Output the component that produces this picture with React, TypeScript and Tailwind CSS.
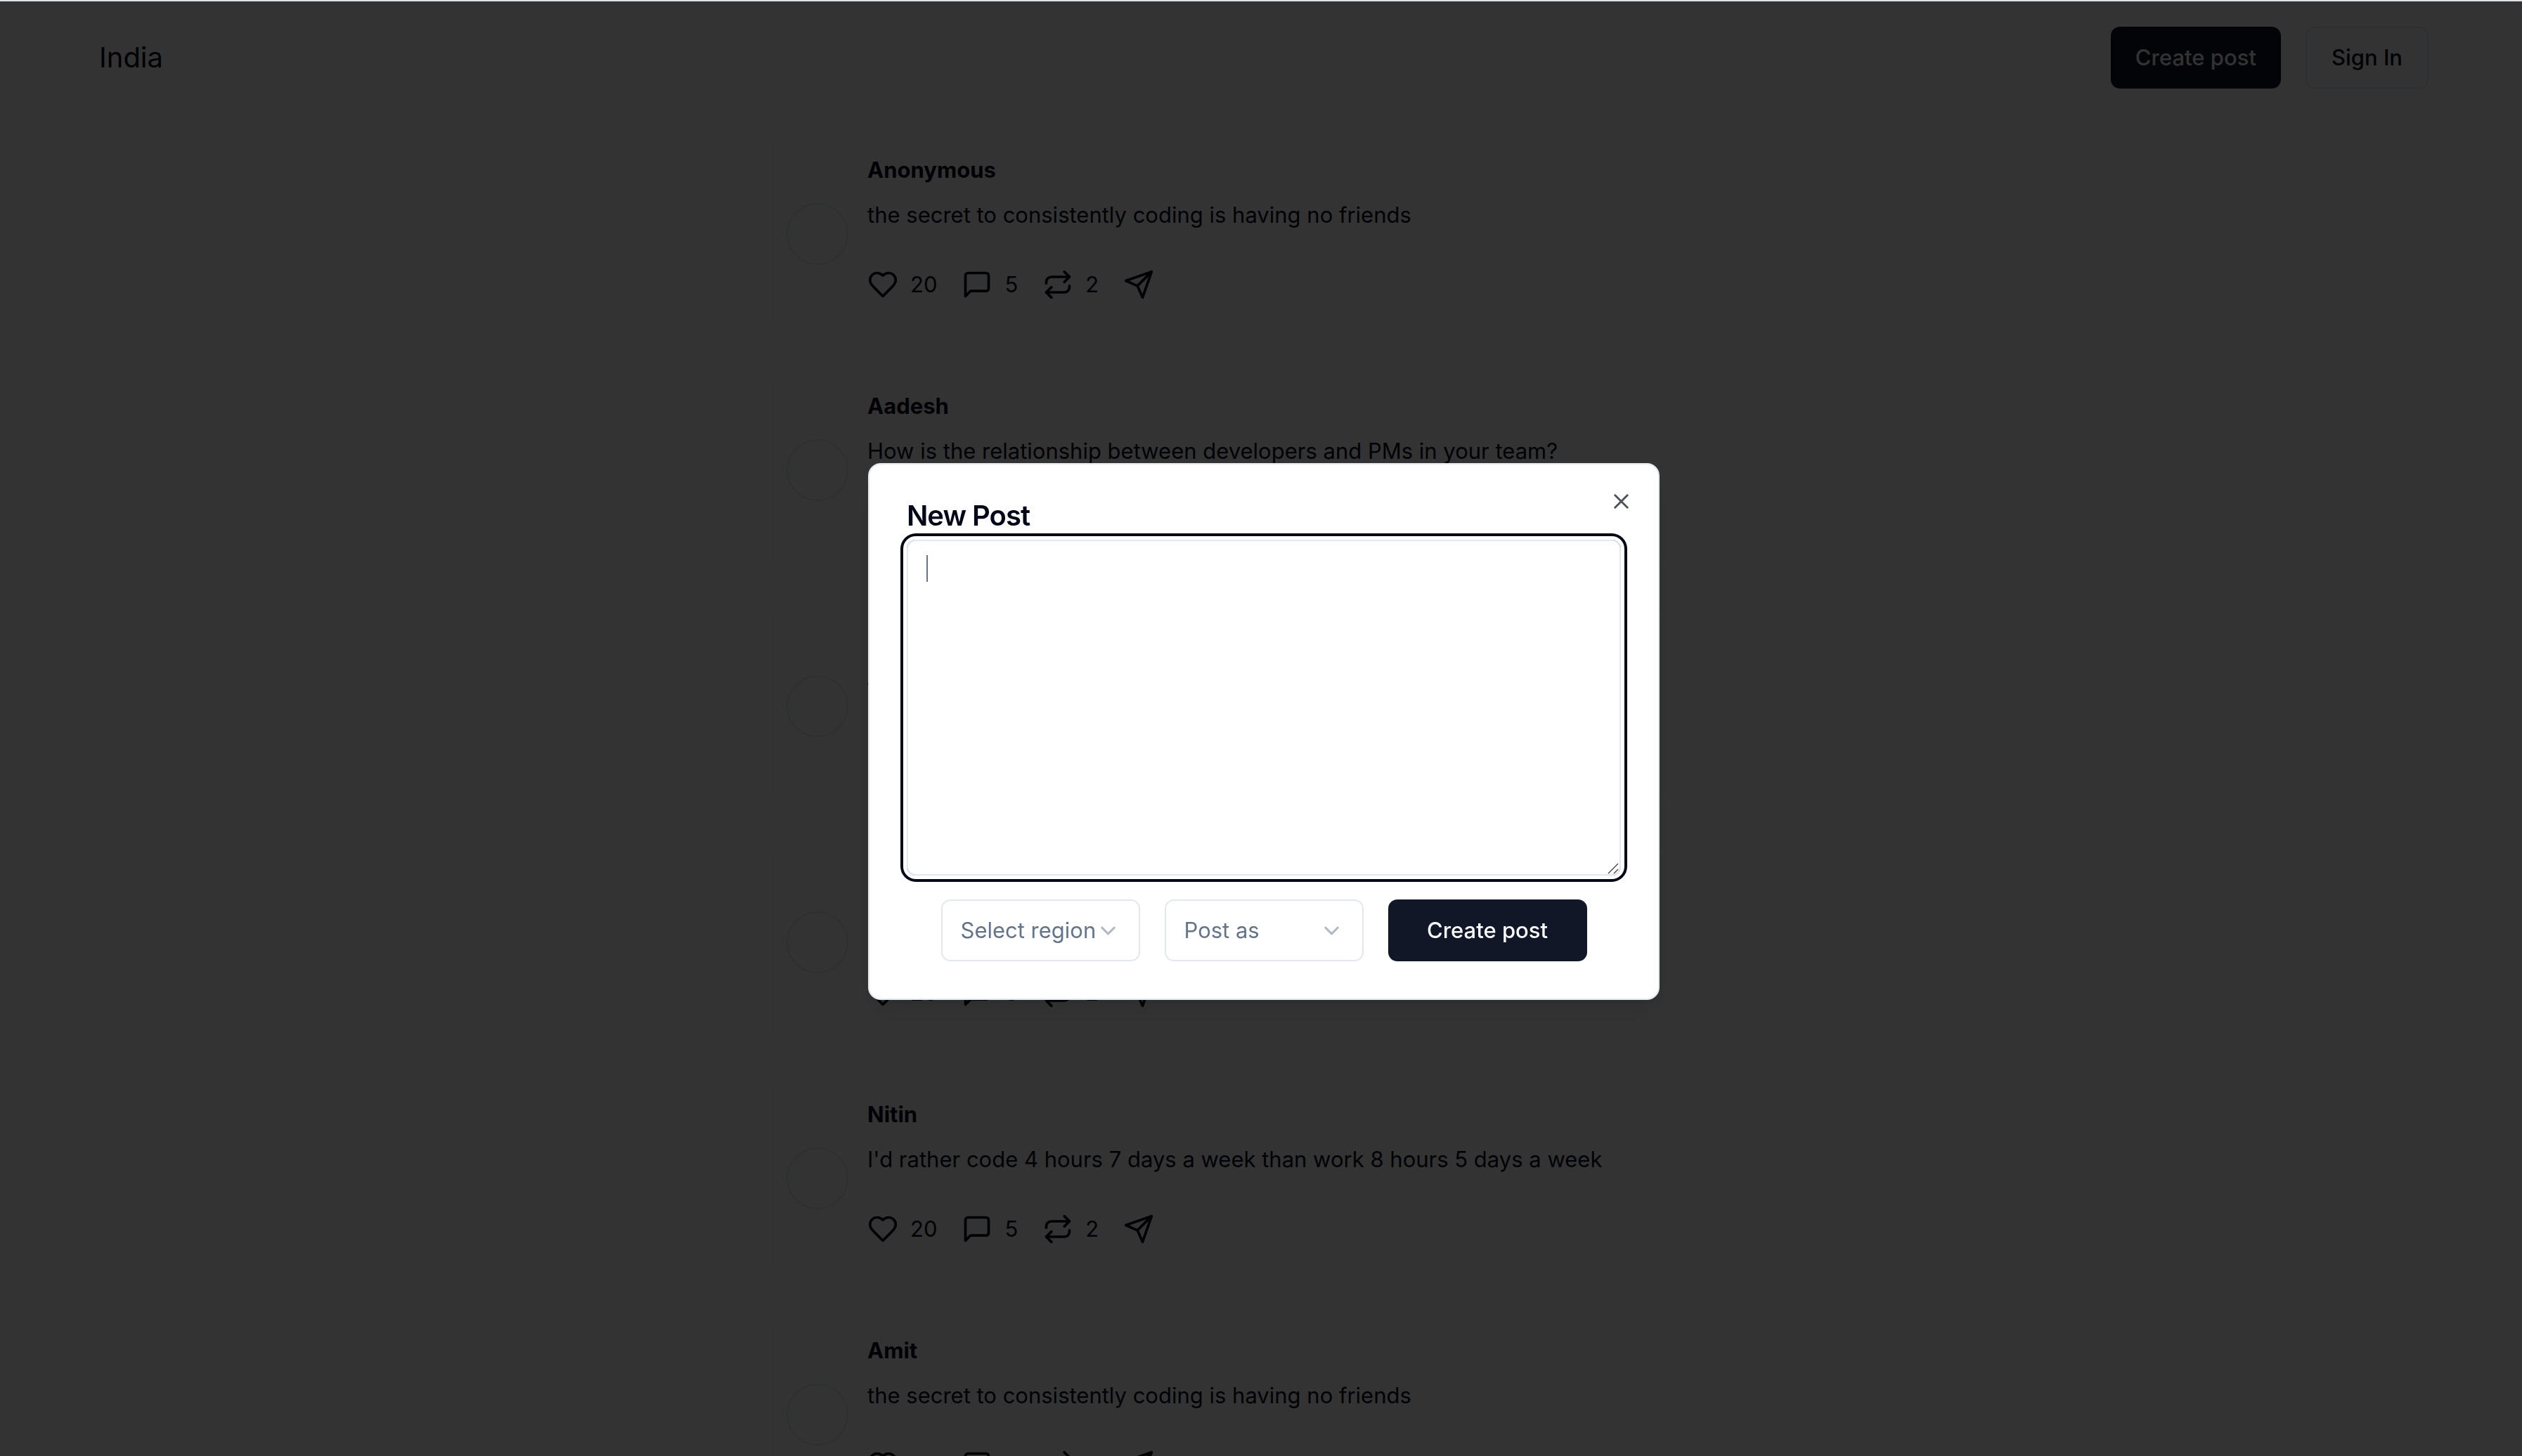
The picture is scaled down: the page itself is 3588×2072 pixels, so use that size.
import type { ReactNode } from "react";
import { ChevronDown, Repeat, X } from "lucide-react";

type Post = { author: string; text: string };

const posts: Post[] = [
  { author: "Anonymous", text: "the secret to consistently coding is having no friends" },
  { author: "Aadesh", text: "How is the relationship between developers and PMs in your team?" },
  { author: "Rahul", text: "the secret to consistently coding is having no friends" },
  { author: "Priya", text: "How is the relationship between developers and PMs in your team?" },
  { author: "Nitin", text: "I'd rather code 4 hours 7 days a week than work 8 hours 5 days a week" },
  { author: "Amit", text: "the secret to consistently coding is having no friends" },
];

function Icon({ children }: { children: ReactNode }) {
  return (
    <svg
      viewBox="0 0 24 24"
      fill="none"
      stroke="currentColor"
      strokeWidth="2"
      strokeLinecap="round"
      strokeLinejoin="round"
      aria-hidden="true"
      className="size-11"
    >
      {children}
    </svg>
  );
}

function PostCard({ author, text }: Post) {
  return (
    <article className="flex h-[265px] items-center rounded-[14px] border-2 border-[#f8f8f8] px-[18px]">
      <div className="size-[88px] shrink-0 rounded-full border-2 border-[#e2e8f0]" />
      <div className="ml-[27px] flex flex-col self-start pt-[18px]">
        <h2 className="text-[31px] leading-11 font-bold">{author}</h2>
        <p className="mt-5 text-[31px] leading-11">{text}</p>
        <div className="mt-[55px] flex items-center gap-[35px] text-[31px] leading-11">
          <button aria-label="Like, 20" className="flex items-center gap-[17px]">
            <Icon>
              <path d="M19 14c1.49-1.46 3-3.21 3-5.5A5.5 5.5 0 0 0 16.5 3c-1.76 0-3 .5-4.5 2-1.5-1.5-2.74-2-4.5-2A5.5 5.5 0 0 0 2 8.5c0 2.3 1.5 4.05 3 5.5l7 7Z" />
            </Icon>
            20
          </button>
          <button aria-label="Comment, 5" className="flex items-center gap-[17px]">
            <Icon>
              <path d="M21 15a2 2 0 0 1-2 2H7l-4 4V5a2 2 0 0 1 2-2h14a2 2 0 0 1 2 2z" />
            </Icon>
            5
          </button>
          <button aria-label="Repost, 2" className="flex items-center gap-[17px]">
            <Repeat className="size-11" />
            2
          </button>
          <button aria-label="Share">
            <Icon>
              <path d="m22 2-7 20-4-9-9-4Z" />
              <path d="M22 2 11 13" />
            </Icon>
          </button>
        </div>
      </div>
    </article>
  );
}

function SelectBox({ label }: { label: string }) {
  return (
    <div className="relative h-[88px] w-[283px]">
      <select
        aria-label={label}
        className="size-full appearance-none rounded-[13px] border-2 border-[#e2e8f0] bg-white px-[26px] text-[31px] text-[#64748b]"
      >
        <option>{label}</option>
      </select>
      <ChevronDown className="pointer-events-none absolute top-[27px] right-7 size-[35px] text-[#64748b] opacity-50" />
    </div>
  );
}

export default function App() {
  return (
    <div className="h-screen overflow-hidden bg-white font-[Inter,sans-serif] text-[#020817]">
      <div className="w-[calc(100%+8px)] border-t-2 border-[#e0e2e4]">
        <header className="flex h-[162px] items-center justify-between border-b-2 border-[#f8f8f8] px-[141px]">
          <a href="#" className="text-[40px] leading-[56px]">India</a>
          <nav className="flex gap-[35px]">
            <button className="h-[88px] rounded-[13px] bg-[#111727] px-[35px] text-[31px] font-medium text-[#f8fafc]">Create post</button>
            <button className="h-[88px] rounded-[13px] border-2 border-[#e2e8f0] px-[35px] text-[31px] font-medium">Sign In</button>
          </nav>
        </header>
        <main className="mx-auto mt-9 flex w-full max-w-[1398px] flex-col gap-[71px]">
          {posts.map((post) => (
            <PostCard key={post.author} {...post} />
          ))}
        </main>
      </div>
      <div className="fixed top-[2px] -right-2 -bottom-2 left-0 flex items-center justify-center bg-black/80">
        <section
          role="dialog"
          aria-labelledby="dialog-title"
          className="relative w-full max-w-[1126px] rounded-[18px] border-2 border-[#e2e8f0] bg-white p-[53px] shadow-[0_22px_33px_-7px_rgb(0_0_0/0.1),0_9px_13px_-9px_rgb(0_0_0/0.1)]"
        >
          <h1 id="dialog-title" className="text-[40px] leading-10 font-semibold tracking-tight">New Post</h1>
          <div className="relative mt-[14px]">
            <textarea
              aria-label="Post text"
              className="block h-[478px] w-full resize-none rounded-[13px] border-2 border-[#e2e8f0] px-[26px] py-[18px] text-[31px] leading-11 ring-4 ring-[#020817] ring-offset-[5px] outline-none"
            />
            <span aria-hidden="true" className="pointer-events-none absolute top-[22px] left-7 h-[38px] w-[2px] bg-[#64748b]" />
            <svg viewBox="0 0 16 16" aria-hidden="true" className="pointer-events-none absolute right-[3px] bottom-[2px] size-4">
              <path d="M1 15 15 1M9 15l6-6" fill="none" stroke="#444444" strokeWidth="1.4" />
            </svg>
          </div>
          <div className="mt-[34px] flex justify-center gap-[35px]">
            <SelectBox label="Select region" />
            <SelectBox label="Post as" />
            <button className="h-[88px] w-[283px] rounded-[13px] bg-[#111727] text-[31px] font-medium text-[#f8fafc]">Create post</button>
          </div>
          <button aria-label="Close" className="absolute top-[35px] right-[35px] opacity-70">
            <X className="size-[35px]" />
          </button>
        </section>
      </div>
    </div>
  );
}
